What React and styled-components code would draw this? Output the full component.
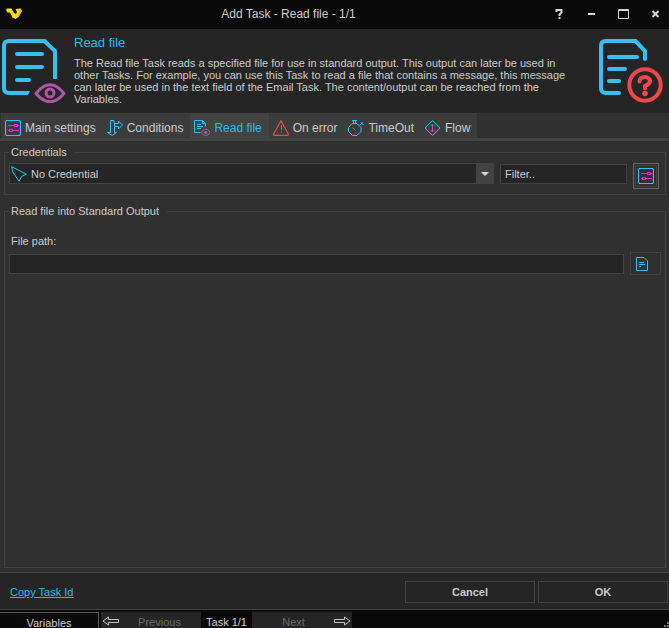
import React from "react";
import styled, { createGlobalStyle } from "styled-components";

const c = {
  black: "#0a0a0a",
  panel: "#252525",
  body: "#303030",
  line: "#434343",
  tab: "#3c3c3c",
  text: "#cccccc",
  dim: "#6c6c6c",
  cyan: "#25bdf0",
  sky: "#35c0f0",
  purple: "#b054a6",
  magenta: "#e622e6",
  red: "#f04848",
};

const Global = createGlobalStyle`
  *, *::before, *::after { box-sizing: border-box; }
  body { margin: 0; background: ${c.black}; }
  body, button, input, select {
    font-family: "Liberation Sans", Arial, sans-serif;
    font-size: 12px;
    line-height: 14px;
    color: ${c.text};
  }
`;

const Window = styled.div`
  display: flex;
  flex-direction: column;
  min-height: 100vh;
  background: ${c.body};
`;

const TitleBar = styled.header`
  display: grid;
  grid-template-columns: 110px 1fr 110px;
  align-items: center;
  height: 29px;
  padding: 0 6px 2px;
  background: ${c.black};
`;

const Title = styled.h1`
  margin: 0;
  padding-right: 92px;
  font-size: 12px;
  font-weight: 400;
  text-align: center;
  white-space: nowrap;
`;

const WindowButtons = styled.div`
  display: flex;
  justify-content: flex-end;
  gap: 16px;
`;

const WindowButton = styled.button`
  display: flex;
  padding: 0;
  border: 0;
  background: none;
`;

const Banner = styled.section`
  display: flex;
  align-items: flex-start;
  height: 84px;
  padding: 7px 6px 0 2px;
  background: ${c.panel};
  & > svg { flex: none; margin-top: 3px; }
`;

const BannerText = styled.div`
  flex: 1;
  padding: 0 20px 0 8px;
`;

const Heading = styled.h2`
  margin: 0 0 7px;
  font-size: 13px;
  line-height: 14px;
  font-weight: 400;
  color: ${c.cyan};
`;

const Description = styled.p`
  margin: 0;
  font-size: 11px;
  line-height: 12px;
`;

const Tabs = styled.nav`
  display: flex;
  padding-left: 1px;
  border-bottom: 3px solid ${c.line};
`;

const Tab = styled.button`
  display: flex;
  align-items: center;
  gap: 4px;
  height: 25px;
  padding: 4px 7px 0 4px;
  border: 0;
  white-space: nowrap;
  background: ${(p) => (p.$active ? c.line : c.tab)};
  color: ${(p) => (p.$active ? c.cyan : c.text)};
`;

const Main = styled.main`
  flex: 1;
  display: flex;
  flex-direction: column;
  gap: 9px;
  padding: 4px 3px 4px 4px;
`;

const Group = styled.fieldset`
  flex: ${(p) => (p.$fill ? 1 : "none")};
  min-width: 0;
  margin: 0;
  padding: ${(p) => (p.$fill ? "16px 4px 0" : "4px 6px 5px 4px")};
  border: 1px solid ${c.line};
`;

const Legend = styled.legend`
  padding: 0 8px 0 2px;
  font-size: 11px;
  line-height: 14px;
`;

const Row = styled.div`
  display: flex;
  align-items: ${(p) => (p.$top ? "flex-start" : "center")};
  gap: 6px;
`;

const Combo = styled.div`
  flex: 1;
  display: grid;
  grid-template-columns: 20px 1fr 17px;
  align-items: center;
  height: 21px;
  border: 1px solid ${c.line};
  background: ${c.panel};
  & > * { grid-row: 1; }
  & > svg { grid-column: 1; z-index: 1; margin-left: 1px; pointer-events: none; }
`;

const ComboSelect = styled.select`
  grid-column: 1 / -1;
  height: 100%;
  padding: 0 18px 0 21px;
  border: 0;
  appearance: none;
  background: transparent;
  font-size: 11px;
`;

const ComboArrow = styled.span`
  grid-column: 3;
  display: grid;
  place-items: center;
  height: 100%;
  background: ${c.line};
  pointer-events: none;
`;

const TextBox = styled.input`
  flex: ${(p) => (p.$narrow ? "0 0 127px" : 1)};
  min-width: 0;
  height: 20px;
  padding: 0 4px;
  border: 1px solid ${c.line};
  border-radius: 0;
  background: ${c.panel};
  font-size: 11px;
  &::placeholder { color: ${c.text}; opacity: 1; }
`;

const FilterCell = styled.div`
  display: flex;
  padding-top: 1px;
`;

const SettingsButton = styled.button`
  display: grid;
  place-items: center;
  width: 26px;
  height: 26px;
  padding: 0;
  border: 1px solid #656565;
  outline: 1px solid ${c.line};
  outline-offset: -3px;
  background: ${c.body};
`;

const BrowseButton = styled.button`
  display: flex;
  align-items: center;
  width: 31px;
  height: 23px;
  padding: 0 5px;
  border: 1px solid ${c.line};
  background: ${c.body};
`;

const Label = styled.label`
  display: block;
  padding-left: 2px;
  margin-bottom: 4px;
  font-size: 11px;
  line-height: 14px;
`;

const Footer = styled.footer`
  display: flex;
  align-items: flex-start;
  gap: 3px;
  height: 38px;
  padding: 8px 1px 0 10px;
  border-top: 1px solid ${c.line};
  border-bottom: 1px solid ${c.line};
  background: ${c.panel};
`;

const CopyLink = styled.a`
  margin: 4px auto 0 0;
  color: ${c.cyan};
  font-size: 11px;
  text-underline-offset: 1px;
`;

const DialogButton = styled.button`
  width: 130px;
  height: 22px;
  padding: 0;
  border: 1px solid ${c.line};
  background: ${c.panel};
  font-size: 11px;
  font-weight: 700;
`;

const StatusBar = styled.div`
  display: flex;
  height: 18px;
  padding-top: 2px;
  overflow: hidden;
  background: ${c.black};
  font-size: 11px;
`;

const VariablesButton = styled.button`
  width: 99px;
  height: 18px;
  margin-right: 2px;
  padding: 2px 0 0;
  border: 1px solid #5a5a5a;
  border-width: 1px 1px 0 0;
  background: ${c.black};
  font-size: 11px;
`;

const StepButton = styled.button`
  display: flex;
  align-items: center;
  flex-direction: ${(p) => (p.$forward ? "row-reverse" : "row")};
  width: 100px;
  height: 18px;
  padding: 0 1px;
  border: 0;
  background: ${c.panel};
  color: ${c.dim};
  font-size: 11px;
  & > span { flex: 1; padding: 2px 0 0; text-align: center; }
`;

const StepCount = styled.span`
  width: 51px;
  padding-top: 3px;
  text-align: center;
  white-space: nowrap;
`;

const Grip = styled.svg`
  margin: 10px 0 0 auto;
`;

const Small = ({ children, stroke = c.sky }) => (
  <svg width="16" height="16" viewBox="0 0 16 16" fill="none" stroke={stroke} strokeWidth="1" aria-hidden="true">
    {children}
  </svg>
);

const SlidersIcon = () => (
  <Small>
    <rect x="0.5" y="0.5" width="15" height="15" rx="1.5" strokeWidth="1.2" />
    <g stroke={c.magenta} shapeRendering="crispEdges">
      <path d="M3 5.5h6M12 5.5h2M3 10.5h1M7 10.5h7" />
      <rect x="9.5" y="4.5" width="3" height="2" />
      <rect x="4.5" y="9.5" width="3" height="2" />
    </g>
  </Small>
);

const BranchIcon = () => (
  <Small>
    <path d="M3.5 0.5h3.5v3h4.500v-2.500l4 4-4 4v-2.500H7.500v6h2L5 15.500L0.500 12.500h3z" />
    <path d="M7.500 3.500v3" />
  </Small>
);

const ReadIcon = () => (
  <Small>
    <path d="M6.500 12.500h-6v-12h8l3 3v3M8.500 0.500v3h3" />
    <path d="M3 4.500h4M3 6.500h6M3 8.500h4" />
    <g stroke={c.purple}>
      <path d="M7.500 12.500c2-4.500 6.500-4.500 8.500 0c-2 4-6.500 4-8.500 0z" />
      <circle cx="11.700" cy="12.500" r="1.200" fill={c.purple} />
    </g>
  </Small>
);

const ErrorIcon = () => (
  <Small stroke={c.red}>
    <path d="M8 0.700L15.400 14.200Q15.600 15.400 14.500 15.400H1.500Q0.400 15.400 0.600 14.200Z" strokeWidth="1.200" />
    <path d="M8.500 5v5M8.500 11v1.500" />
  </Small>
);

const TimerIcon = () => (
  <Small>
    <path d="M4 0.500h5M5.500 0.500v3M7.500 0.500v3M4 3.500h5l4 4v4l-4 4H4.500l-4-4v-4zM11.500 5.500l3-3M13 2.500l2.500 2.500" />
    <path d="M4.500 7.500l3 3" stroke={c.purple} />
  </Small>
);

const FlowIcon = () => (
  <Small>
    <path d="M7.500 0.500l7.500 7.500-7.500 7.500-7.500-7.500z" />
    <path d="M7.500 4v8M5.500 6l2-2 2 2M5.500 10l2 2 2-2" stroke={c.purple} />
  </Small>
);

const PointerIcon = () => (
  <Small>
    <path d="M0.700 0.700L15.300 8.200L10.500 10.500L8 15.300L1.500 5.500Z" />
  </Small>
);

const PageIcon = () => (
  <svg width="12" height="14" viewBox="0 0 12 14" fill="none" stroke={c.sky} aria-hidden="true">
    <path d="M0.500 0.500h7.500l3.500 3.500v9.500h-11z" />
    <path d="M3 5.500h5M3 7.500h6M3 9.500h2" />
  </svg>
);

const Logo = () => (
  <svg width="16" height="11" viewBox="0 0 16 11" aria-label="Logo">
    <path d="M0 2L1 0.500H5.500L8 5L10 6L11 4L9.500 1L14.500 0.500L16 3L12.500 9L9.500 11L6.500 9.500L4 4.500H1.500Z" fill="#f7de1d" />
    <path d="M12.500 1L14.500 0.500L16 3L12.500 9L11.500 8L13.500 4Z" fill="#f0b913" />
  </svg>
);

const FileEyeArt = () => (
  <svg width="64" height="64" viewBox="0 0 64 64" fill="none" stroke={c.sky} strokeWidth="4" aria-hidden="true">
    <path d="M53 40V12L42.500 2H7Q2 2 2 7V49Q2 54 7 54H26" />
    <path d="M25 56h1l2-4h-3z" fill={c.sky} stroke="none" />
    <path d="M15 15H40M15 28H40M15 41H27" strokeLinecap="round" />
    <g stroke={c.purple}>
      <path d="M34 54.500Q48 37 62 54.500Q48 71 34 54.500Z" strokeWidth="3" strokeLinejoin="round" />
      <circle cx="48" cy="54" r="4" strokeWidth="3" />
    </g>
  </svg>
);

const FileHelpArt = () => (
  <svg width="64" height="64" viewBox="0 0 64 64" fill="none" stroke={c.sky} strokeWidth="4" strokeLinecap="round" aria-hidden="true">
    <path d="M46 20V12L36.500 2H7Q2 2 2 7V49Q2 54 7 54H20M10 18H38M10 30H26M10 42H20" />
    <g stroke={c.red}>
      <circle cx="46" cy="46" r="15.700" />
      <path d="M40.500 42.500Q41 38 46 38Q51 38.500 51 42.500Q50.500 45 46 47V49.500" />
      <circle cx="46" cy="54.500" r="2.800" fill={c.red} stroke="none" />
    </g>
  </svg>
);

const ArrowArt = ({ forward }) => (
  <svg width="17" height="10" viewBox="0 0 17 10" fill="none" stroke="#c4c4c4" aria-hidden="true">
    <path d={forward ? "M0.500 3.500h10V1l5.500 4-5.500 4V6.500h-10z" : "M16.500 3.500h-10V1L1 5l5.500 4V6.500h10z"} />
  </svg>
);

const tabs = [
  ["Main settings", SlidersIcon],
  ["Conditions", BranchIcon],
  ["Read file", ReadIcon],
  ["On error", ErrorIcon],
  ["TimeOut", TimerIcon],
  ["Flow", FlowIcon],
];

export default function App() {
  return (
    <>
      <Global />
      <Window>
        <TitleBar>
          <Logo />
          <Title>Add Task - Read file - 1/1</Title>
          <WindowButtons>
            <WindowButton aria-label="Help">
              <svg width="16" height="12" viewBox="0 0 16 12" fill="none" stroke="#d8d8d8" strokeWidth="2">
                <path d="M5.500 4V2H10.500V4.500L8.500 6.500V8M8.500 9v2" />
              </svg>
            </WindowButton>
            <WindowButton aria-label="Minimize">
              <svg width="16" height="12" viewBox="0 0 16 12" stroke="#d8d8d8" strokeWidth="2">
                <path d="M5 6h7" />
              </svg>
            </WindowButton>
            <WindowButton aria-label="Maximize">
              <svg width="16" height="12" viewBox="0 0 16 12" fill="none" stroke="#d8d8d8">
                <path d="M3.500 1.500h10v9h-10zM3 2.500h11" />
              </svg>
            </WindowButton>
            <WindowButton aria-label="Close">
              <svg width="16" height="12" viewBox="0 0 16 12" stroke="#d8d8d8" strokeWidth="2">
                <path d="M5.500 3l6 6M11.500 3l-6 6" />
              </svg>
            </WindowButton>
          </WindowButtons>
        </TitleBar>

        <Banner>
          <FileEyeArt />
          <BannerText>
            <Heading>Read file</Heading>
            <Description>
              The Read file Task reads a specified file for use in standard output. This output can later be used in
              other Tasks. For example, you can use this Task to read a file that contains a message, this message can
              later be used in the text field of the Email Task. The content/output can be reached from the Variables.
            </Description>
          </BannerText>
          <FileHelpArt />
        </Banner>

        <Tabs aria-label="Task sections">
          {tabs.map(([name, Icon]) => (
            <Tab key={name} $active={name === "Read file"}>
              <Icon />
              {name}
            </Tab>
          ))}
        </Tabs>

        <Main>
          <Group>
            <Legend>Credentials</Legend>
            <Row $top>
              <Combo>
                <PointerIcon />
                <ComboSelect aria-label="Credential">
                  <option>No Credential</option>
                </ComboSelect>
                <ComboArrow>
                  <svg width="8" height="4" viewBox="0 0 8 4" aria-hidden="true">
                    <path d="M0 0h8L4 4z" fill="#d8d8d8" />
                  </svg>
                </ComboArrow>
              </Combo>
              <FilterCell>
                <TextBox $narrow aria-label="Filter" placeholder="Filter.." />
              </FilterCell>
              <SettingsButton aria-label="Manage credentials">
                <SlidersIcon />
              </SettingsButton>
            </Row>
          </Group>

          <Group $fill>
            <Legend>Read file into Standard Output</Legend>
            <Label htmlFor="path">File path:</Label>
            <Row>
              <TextBox id="path" />
              <BrowseButton aria-label="Browse for file">
                <PageIcon />
              </BrowseButton>
            </Row>
          </Group>
        </Main>

        <Footer>
          <CopyLink href="#copy">Copy Task Id</CopyLink>
          <DialogButton>Cancel</DialogButton>
          <DialogButton>OK</DialogButton>
        </Footer>
        <StatusBar>
          <VariablesButton>Variables</VariablesButton>
          <StepButton disabled>
            <ArrowArt />
            <span>Previous</span>
          </StepButton>
          <StepCount>Task 1/1</StepCount>
          <StepButton $forward disabled>
            <ArrowArt forward />
            <span>Next</span>
          </StepButton>
          <Grip width="5" height="6" viewBox="0 0 5 6" fill="#777" aria-hidden="true">
            <path d="M3 0h2v2h-2zM0 3h2v2h-2zM3 3h2v2h-2z" />
          </Grip>
        </StatusBar>
      </Window>
    </>
  );
}
